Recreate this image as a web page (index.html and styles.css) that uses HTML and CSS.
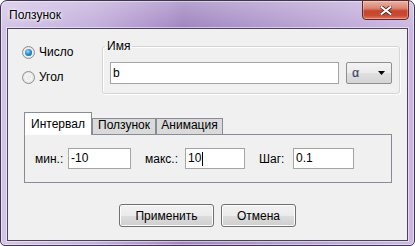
FILE: index.html
```html
<!DOCTYPE html>
<html lang="ru">
<head>
  <meta charset="UTF-8" />
  <title>Ползунок</title>
  <link rel="stylesheet" href="styles.css">
</head>
<body>
<div class="window">
  <div class="titlebar">
    <span class="title">Ползунок</span>
    <button class="close" aria-label="Закрыть">
      <svg width="12" height="9" viewBox="0 0 12 9">
        <path d="M1.5 1 L10.5 8 M10.5 1 L1.5 8" stroke="#4a1d1a" stroke-width="3.6" stroke-linecap="square" fill="none"/>
        <path d="M1.5 1 L10.5 8 M10.5 1 L1.5 8" stroke="#fff" stroke-width="2" stroke-linecap="square" fill="none"/>
      </svg>
    </button>
  </div>

  <div class="client">
    <div class="top">
      <div class="radios">
        <label class="radio"><span class="dot checked"></span>Число</label>
        <label class="radio"><span class="dot"></span>Угол</label>
      </div>
      <fieldset class="group">
        <legend>Имя</legend>
        <div class="name-row">
          <div class="field name">b</div>
          <div class="combo">
            <span class="alpha">α</span>
            <svg width="7" height="4" viewBox="0 0 7 4"><polygon points="0,0 7,0 3.5,4" fill="#000"/></svg>
          </div>
        </div>
      </fieldset>
    </div>

    <div class="tabs">
      <div class="tab-strip">
        <div class="tab active">Интервал</div>
        <div class="tab w-slider">Ползунок</div>
        <div class="tab w-anim">Анимация</div>
      </div>
      <div class="tab-panel">
        <span class="lbl lbl-min">мин.:</span>
        <div class="field f-min">-10</div>
        <span class="lbl lbl-max">макс.:</span>
        <div class="field f-max">10<span class="caret"></span></div>
        <span class="lbl lbl-step">Шаг:</span>
        <div class="field f-step">0.1</div>
      </div>
    </div>

    <div class="buttons">
      <button class="btn btn-apply">Применить</button>
      <button class="btn btn-cancel">Отмена</button>
    </div>
  </div>
</div>
</body>
</html>
```

FILE: styles.css
```css
/* Рамка окна */
body {
  margin: 0;
  font-family: "Liberation Sans", Arial, sans-serif;
  font-size: 12px;
  color: #000;
}

.window {
  width: 415px;
  height: 246px;
  box-sizing: border-box;
  border: 1px solid #3e3550;
  border-radius: 7px 7px 5px 5px;
  padding: 0 6px 4px;
  display: flex;
  flex-direction: column;
  background:
    linear-gradient(rgba(255,255,255,0.25), rgba(255,255,255,0) 28px),
    linear-gradient(90deg, #d4c5e7 0%, #c4afdc 22%, #a98ec8 40%, #9f84bf 44%, #a890c7 55%, #b9a2d3 75%, #cbb8e0 100%);
  box-shadow: inset 0 0 0 1px rgba(255,255,255,0.45);
}

.titlebar {
  height: 27px;
  display: flex;
  align-items: flex-start;
  justify-content: space-between;
}

.title {
  padding: 7px 0 0 2px;
  line-height: 14px;
  text-shadow: 0 0 5px #fff, 0 0 3px #fff;
}

.close {
  width: 47px;
  height: 20px;
  margin: -1px -1px 0 0;
  padding: 0;
  box-sizing: border-box;
  border: 1px solid #5e2a26;
  border-radius: 0 0 4px 4px;
  background: linear-gradient(#eab1a4 0%, #dc8572 40%, #c8452d 55%, #c94a31 80%, #de7d5f 100%);
  box-shadow: inset 0 0 0 1px rgba(255,255,255,0.3);
  display: flex;
  align-items: center;
  justify-content: center;
}

/* Клиентская область */
.client {
  flex: 1;
  border: 1px solid #4b4358;
  background: #f0f0f0;
  display: flex;
  flex-direction: column;
  box-shadow: 0 0 0 1px rgba(255,255,255,0.5);
}

.top {
  display: flex;
  padding: 10px 7px 0 14px;
}

.radios {
  width: 80px;
  padding-top: 6px;
  display: flex;
  flex-direction: column;
  gap: 10px;
}

.radio {
  display: flex;
  align-items: center;
  gap: 4px;
  line-height: 15px;
}

.dot {
  width: 13px;
  height: 13px;
  box-sizing: border-box;
  border-radius: 50%;
  border: 1px solid #8e8f8f;
  background: radial-gradient(circle at 50% 50%, #e6e6e6 0%, #f4f4f4 40%, #d2d2d2 100%);
  display: flex;
  align-items: center;
  justify-content: center;
}

.dot.checked::after {
  content: "";
  width: 7px;
  height: 7px;
  border-radius: 50%;
  background: radial-gradient(circle at 40% 35%, #8fdcff 0%, #2d8fd2 45%, #0d4a82 100%);
}

/* Группа «Имя» */
.group {
  flex: 1;
  min-width: 0;
  margin: 0;
  padding: 9px 7px 9px;
  border: 1px solid #d5d5d5;
  border-radius: 3px;
  box-shadow: inset 1px 1px 0 #fff, 1px 1px 0 #fff;
}

.group legend {
  padding: 0 2px;
  margin-left: -5px;
  line-height: 14px;
}

.name-row {
  display: flex;
  gap: 7px;
}

.field {
  height: 22px;
  box-sizing: border-box;
  border: 1px solid #a5a5a5;
  background: #fff;
  padding: 0 2px;
  line-height: 20px;
}

.field.name {
  flex: 1;
}

.combo {
  width: 46px;
  height: 22px;
  box-sizing: border-box;
  border: 1px solid #8e8f8f;
  border-radius: 2px;
  background: linear-gradient(#f3f3f3 0%, #ebebeb 50%, #dfdfdf 51%, #d5d5d5 100%);
  padding: 0 6px 0 5px;
  display: flex;
  align-items: center;
  justify-content: space-between;
}

.alpha {
  color: #1d3f86;
  line-height: 14px;
  text-shadow: 1px 0 0 rgba(214,140,40,0.5);
}

/* Вкладки */
.tabs {
  margin: 18px 15px 0 16px;
}

.tab-strip {
  display: flex;
  align-items: flex-end;
}

.tab {
  height: 16px;
  box-sizing: border-box;
  border: 1px solid #898c95;
  border-bottom: none;
  background: #dadada;
  text-align: center;
  line-height: 12px;
}

.tab.active {
  width: 68px;
  height: 23px;
  margin-bottom: -1px;
  padding-top: 4px;
  line-height: 14px;
  background: #fff;
  position: relative;
  z-index: 1;
}

.w-slider { width: 64px; }
.w-anim { width: 67px; }

.tab-panel {
  height: 49px;
  box-sizing: border-box;
  border: 1px solid #898c95;
  padding-left: 10px;
  display: flex;
  align-items: center;
}

.tab-panel .field {
  height: 21px;
  line-height: 19px;
}

.lbl-min { width: 33px; }
.lbl-max { width: 40px; margin-left: 14px; }
.lbl-step { width: 34px; margin-left: 14px; }

.f-min { width: 63px; }
.f-max { width: 60px; }
.f-step { width: 61px; }

.caret {
  display: inline-block;
  width: 1px;
  height: 14px;
  margin-left: 1px;
  background: #000;
  vertical-align: -4px;
}

/* Кнопки */
.buttons {
  display: flex;
  justify-content: center;
  gap: 7px;
  margin-top: 21px;
}

.btn {
  height: 23px;
  padding: 0;
  border: 1px solid #707070;
  border-radius: 3px;
  background: linear-gradient(#f2f2f2 0%, #ebebeb 50%, #dddddd 51%, #cfcfcf 100%);
  box-shadow: inset 0 0 0 1px #fcfcfc;
  font: 12px "Liberation Sans", Arial, sans-serif;
  color: #000;
}

.btn-apply { width: 95px; }
.btn-cancel { width: 75px; }
```
